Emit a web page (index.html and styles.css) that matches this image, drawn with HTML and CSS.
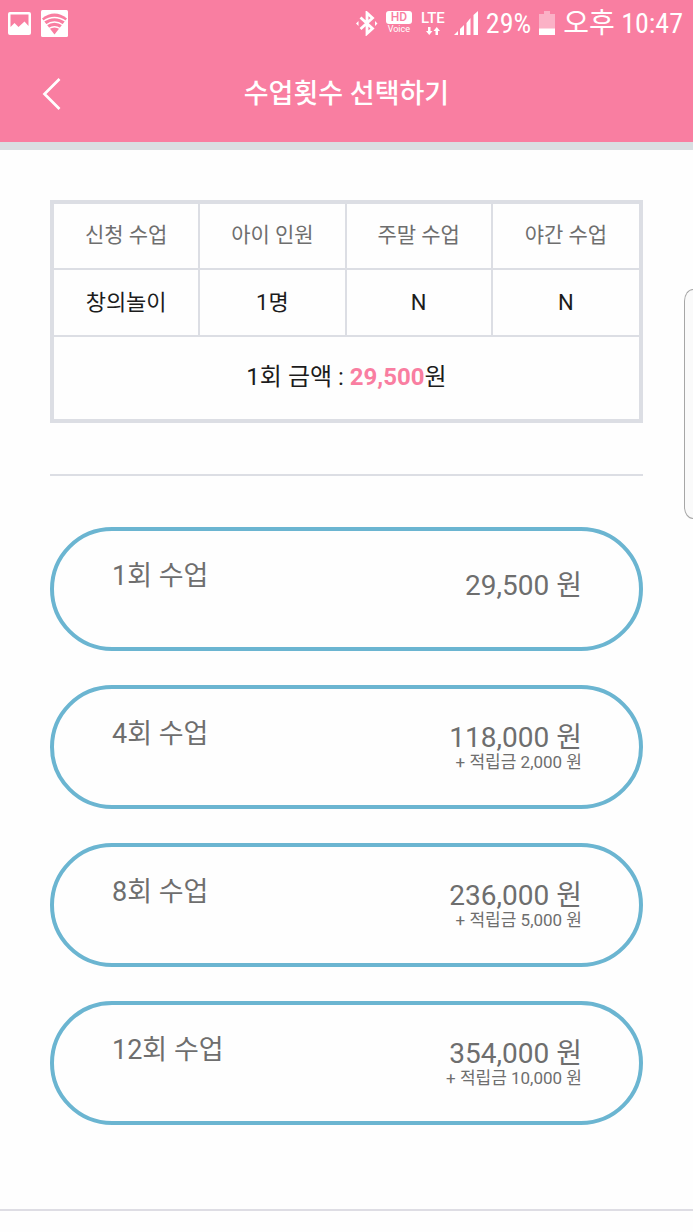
FILE: index.html
```html
<!DOCTYPE html>
<html lang="ko">
<head>
<meta charset="utf-8">
<meta name="viewport" content="width=device-width, initial-scale=1">
<title>수업횟수 선택하기</title>
<link rel="stylesheet" href="styles.css">
</head>
<body>
<header class="top">
  <div class="status">
    <div class="status-group">
      <svg width="23" height="23" viewBox="0 0 23 23" aria-hidden="true"><path fill="#fff" fill-rule="evenodd" d="M2 0h19a2 2 0 0 1 2 2v19a2 2 0 0 1-2 2H2a2 2 0 0 1-2-2V2a2 2 0 0 1 2-2zM2.500 2.500V15l4-4 4 4 6-5.500 4 4.500V2.500z"/></svg>
      <svg width="27" height="27" viewBox="0 0 27 27" aria-hidden="true"><rect width="27" height="27" rx="1.500" fill="#fff"/><path fill="#f97ea1" d="M1 8.500Q13.500-1.500 26 8.500L13.500 24.500z"/><path fill="none" stroke="#fff" stroke-width="1.300" d="M2 11.500q11.500-8 23 0M5 15q8.500-6 17 0M8 18.500q5.500-3.500 11 0"/></svg>
    </div>
    <div class="status-group status-right">
      <svg width="22" height="25" viewBox="0 0 22 25" aria-hidden="true"><path fill="none" stroke="#fff" stroke-width="2.800" d="M4.500 6.500l12 11-5.500 5V2l5.500 5-12 11"/><path fill="#fff" d="M2.500 10v5L0 12.500zM19 10v5l2.500-2.500z"/></svg>
      <div class="badge"><span class="hd">HD</span><span class="voice">Voice</span></div>
      <div class="badge lte"><span>LTE</span>
        <svg width="14" height="8" viewBox="0 0 14 8" aria-hidden="true"><path fill="#fff" d="M2 0h2.500v4H6.500L3.250 8 0 4h2zM9.500 8H12V4h2L10.750 0 7.500 4h2z"/></svg>
      </div>
      <svg width="24" height="24" viewBox="0 0 24 24" aria-hidden="true"><path fill="#fff" d="M0 24l4-4v4zM6 18l4-4v10H6zM12.500 12l4-5v17h-4zM19.500 4L24 0v24h-4.500z"/></svg>
      <span class="status-text">29%</span>
      <svg width="16" height="24" viewBox="0 0 16 24" aria-hidden="true"><path fill="#fff" fill-opacity=".4" d="M5 0h6v3h5v15H0V3h5z"/><path fill="#fff" d="M0 17.500h16V24H0z"/></svg>
      <span class="status-text">오후 10:47</span>
    </div>
  </div>
  <div class="nav">
    <button class="back" type="button" aria-label="뒤로"><svg width="20" height="32" viewBox="0 0 20 32" aria-hidden="true"><path fill="none" stroke="#fff" stroke-width="2.700" d="M17.500 1L2.500 16l15 15"/></svg></button>
    <h1 class="title">수업횟수 선택하기</h1>
  </div>
</header>
<main class="content">
  <table class="summary">
    <thead><tr><th scope="col">신청 수업</th><th scope="col">아이 인원</th><th scope="col">주말 수업</th><th scope="col">야간 수업</th></tr></thead>
    <tbody>
      <tr class="values"><td>창의놀이</td><td>1명</td><td>N</td><td>N</td></tr>
      <tr class="total"><td colspan="4">1회 금액 : <strong>29,500</strong>원</td></tr>
    </tbody>
  </table>
  <hr class="divider">
  <div class="options">
    <button class="option" type="button"><span class="name">1회 수업</span><span class="cost"><span class="price">29,500 원</span></span></button>
    <button class="option" type="button"><span class="name">4회 수업</span><span class="cost"><span class="price">118,000 원</span><span class="bonus">+ 적립금 2,000 원</span></span></button>
    <button class="option" type="button"><span class="name">8회 수업</span><span class="cost"><span class="price">236,000 원</span><span class="bonus">+ 적립금 5,000 원</span></span></button>
    <button class="option" type="button"><span class="name">12회 수업</span><span class="cost"><span class="price">354,000 원</span><span class="bonus">+ 적립금 10,000 원</span></span></button>
  </div>
</main>
<footer class="bottom"></footer>
<div class="edge-handle"></div>
</body>
</html>
```
FILE: styles.css
```css
* { box-sizing: border-box; }
body {
  margin: 0;
  position: relative;
  background: #fefefe;
  color: #1c1c1c;
  font-family: Roboto, "Noto Sans CJK KR", sans-serif;
  overflow-x: hidden;
}
button {
  margin: 0;
  background: none;
  border: 0;
  color: inherit;
  font: inherit;
  cursor: pointer;
}
svg { display: block; flex: none; }

.top {
  background: #f97ea1;
  border-bottom: 8px solid #dadee2;
  color: #fff;
}
.status {
  display: flex;
  justify-content: space-between;
  align-items: center;
  height: 46px;
  padding: 0 10px 0 8px;
}
.status-group { display: flex; align-items: center; gap: 10px; }
.status-right { gap: 8px; }
.status-text {
  padding-top: 2px;
  font-family: "Roboto Condensed", Roboto, "Noto Sans CJK KR", sans-serif;
  font-size: 28px;
  line-height: 44px;
  white-space: nowrap;
}
.badge {
  display: flex;
  flex-direction: column;
  align-items: center;
  width: 26px;
  font-size: 9px;
  line-height: 11px;
}
.hd {
  width: 100%;
  background: #fff;
  border-radius: 3px;
  color: #f97ea1;
  font-size: 12px;
  font-weight: 500;
  line-height: 13px;
  text-align: center;
}
.lte {
  gap: 3px;
  font-size: 15px;
  font-weight: 500;
  line-height: 12px;
}
.nav {
  display: grid;
  grid-template-columns: 64px 1fr 64px;
  align-items: center;
  height: 96px;
}
.back {
  display: flex;
  justify-content: flex-end;
  padding: 0 2px 0 0;
}
.title {
  margin: 0;
  font-size: 27px;
  font-weight: 500;
  line-height: 40px;
  text-align: center;
}

.content { padding: 50px 50px 84px; }
.summary {
  width: 100%;
  table-layout: fixed;
  border: 4px solid #dcdee4;
  border-spacing: 0;
  text-align: center;
}
.summary th,
.summary td {
  height: 66px;
  padding: 0;
  border-right: 2px solid #dcdee4;
  border-bottom: 2px solid #dcdee4;
  font-size: 22px;
  line-height: 32px;
}
.summary th {
  padding-bottom: 2px;
  color: #6e6e6e;
  font-size: 21px;
  font-weight: 400;
}
.summary th:last-child,
.summary td:last-child { border-right: 0; }
.summary .values td { height: 67px; }
.summary .total td {
  height: 82px;
  padding-bottom: 2px;
  border-bottom: 0;
  font-size: 24px;
}
.total strong { color: #f97ea1; font-weight: 700; }

.divider {
  height: 2px;
  margin: 51px 0;
  border: 0;
  background: #dcdee4;
}
.options { display: flex; flex-direction: column; gap: 34px; }
.option {
  display: flex;
  justify-content: space-between;
  height: 124px;
  padding: 25px 57px 24px 58px;
  border: 4px solid #6bb5d1;
  border-radius: 62px;
  color: #6e6e6e;
  text-align: left;
}
.name { font-size: 27px; line-height: 40px; }
.cost {
  display: flex;
  flex-direction: column;
  align-items: flex-end;
  padding-top: 14px;
}
.price { font-size: 28px; line-height: 32px; }
.bonus { font-size: 17px; line-height: 16px; }
.option:not(:first-child) .cost { padding-top: 8px; }

.bottom { height: 23px; border-top: 2px solid #dedde4; }
.edge-handle {
  position: absolute;
  top: 289px;
  right: 0;
  width: 9px;
  height: 230px;
  background: #fafafa;
  border: 1px solid #a6a6a6;
  border-right: 0;
  border-radius: 9px 0 0 9px / 12px 0 0 12px;
}
```
